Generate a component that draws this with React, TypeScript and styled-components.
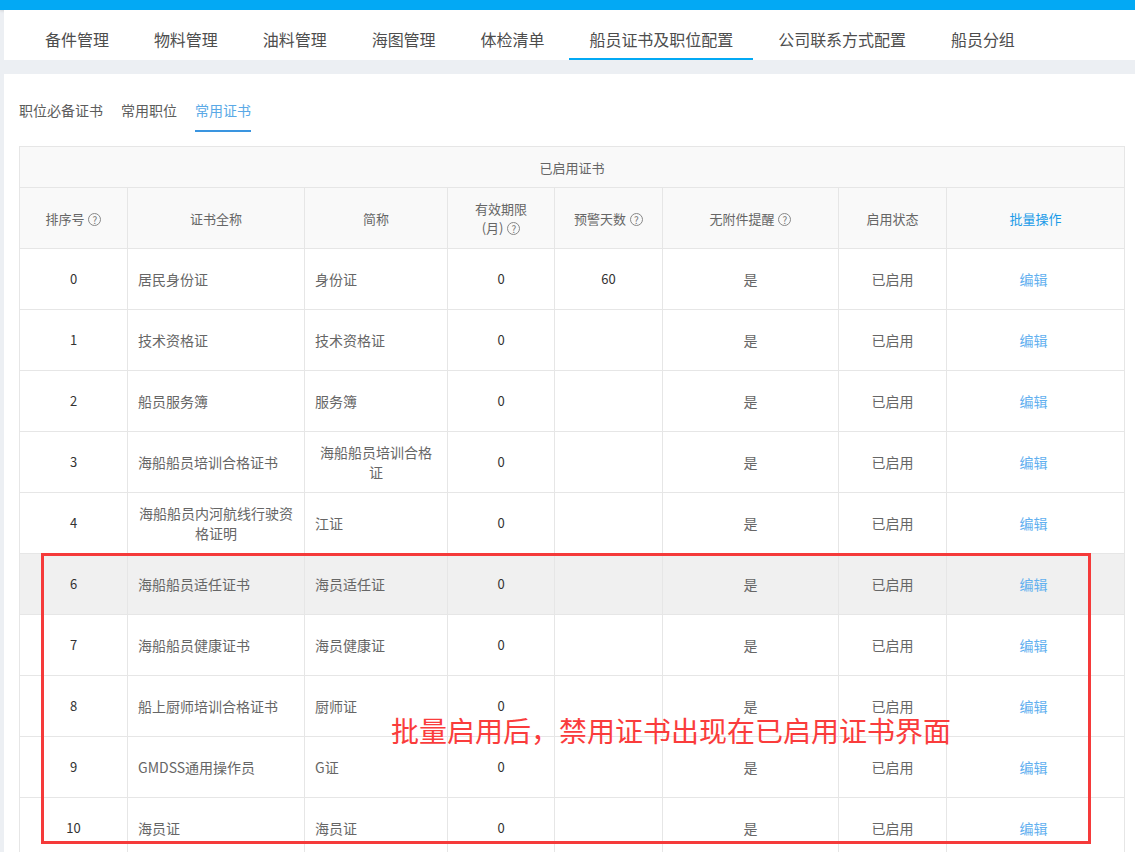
import styled, { createGlobalStyle } from "styled-components";

type Cert = {
  no: string;
  name: string;
  short: string;
  valid: string;
  warn?: string;
  hover?: boolean;
};

const tabs = [
  "备件管理",
  "物料管理",
  "油料管理",
  "海图管理",
  "体检清单",
  "船员证书及职位配置",
  "公司联系方式配置",
  "船员分组",
];

const subTabs = ["职位必备证书", "常用职位", "常用证书"];

const certs: Cert[] = [
  { no: "0", name: "居民身份证", short: "身份证", valid: "0", warn: "60" },
  { no: "1", name: "技术资格证", short: "技术资格证", valid: "0" },
  { no: "2", name: "船员服务簿", short: "服务簿", valid: "0" },
  { no: "3", name: "海船船员培训合格证书", short: "海船船员培训合格证", valid: "0" },
  { no: "4", name: "海船船员内河航线行驶资格证明", short: "江证", valid: "0" },
  { no: "6", name: "海船船员适任证书", short: "海员适任证", valid: "0", hover: true },
  { no: "7", name: "海船船员健康证书", short: "海员健康证", valid: "0" },
  { no: "8", name: "船上厨师培训合格证书", short: "厨师证", valid: "0" },
  { no: "9", name: "GMDSS通用操作员", short: "G证", valid: "0" },
  { no: "10", name: "海员证", short: "海员证", valid: "0" },
];

const colWidths = [108, 177, 143, 107, 108, 176, 108, 178];

const Help = () => <HelpMark>?</HelpMark>;

export default function App() {
  return (
    <Page>
      <GlobalStyle />
      <TopStrip />
      <Main>
        <TabBar>
          {tabs.map((t) => (
            <Tab key={t} $active={t === "船员证书及职位配置"}>
              {t}
            </Tab>
          ))}
        </TabBar>
        <Content>
          <SubTabs>
            {subTabs.map((t) => (
              <SubTab key={t} $active={t === "常用证书"}>
                {t}
              </SubTab>
            ))}
          </SubTabs>
          <Table>
            <colgroup>
              {colWidths.map((w, i) => (
                <col key={i} style={{ width: w }} />
              ))}
            </colgroup>
            <thead>
              <tr>
                <Caption colSpan={8}>已启用证书</Caption>
              </tr>
              <tr>
                <HeadCell>
                  排序号 <Help />
                </HeadCell>
                <HeadCell>证书全称</HeadCell>
                <HeadCell>简称</HeadCell>
                <HeadCell>
                  有效期限
                  <br />
                  (月) <Help />
                </HeadCell>
                <HeadCell>
                  预警天数 <Help />
                </HeadCell>
                <HeadCell>
                  无附件提醒 <Help />
                </HeadCell>
                <HeadCell>启用状态</HeadCell>
                <HeadCell $link>批量操作</HeadCell>
              </tr>
            </thead>
            <tbody>
              {certs.map((c) => (
                <Row key={c.no} $hover={c.hover}>
                  <Cell $num>{c.no}</Cell>
                  <Cell $align="left">
                    <Wrap>{c.name}</Wrap>
                  </Cell>
                  <Cell $align="left">
                    <Wrap>{c.short}</Wrap>
                  </Cell>
                  <Cell $num>{c.valid}</Cell>
                  <Cell $num>{c.warn ?? ""}</Cell>
                  <Cell>是</Cell>
                  <Cell>已启用</Cell>
                  <Cell>
                    <EditLink>编辑</EditLink>
                  </Cell>
                </Row>
              ))}
            </tbody>
          </Table>
        </Content>
      </Main>
      <MarkBox />
      <Note>批量启用后，禁用证书出现在已启用证书界面</Note>
    </Page>
  );
}

const GlobalStyle = createGlobalStyle`
  html, body {
    margin: 0;
    padding: 0;
    overflow: hidden;
    background: #eceff3;
    font-family: "Noto Sans CJK SC", "Liberation Sans", sans-serif;
  }
  * { box-sizing: border-box; }
`;

const Page = styled.div`
  position: relative;
  width: 1135px;
  height: 852px;
  overflow: hidden;
`;

const TopStrip = styled.div`
  height: 10px;
  background: #03a9f4;
  box-shadow: 0 1px 3px rgba(0, 0, 0, 0.12);
`;

const Main = styled.div`
  margin-left: 4px;
`;

const TabBar = styled.div`
  display: flex;
  gap: 5px;
  height: 50px;
  padding-left: 21px;
  background: #fff;
`;

const Tab = styled.div<{ $active?: boolean }>`
  padding: 18px 20px 8px;
  font-size: 16px;
  line-height: 22px;
  color: #4d4d4d;
  letter-spacing: -0.03px;
  border-bottom: 2px solid ${(p) => (p.$active ? "#03a9f4" : "transparent")};
`;

const Content = styled.div`
  margin-top: 14px;
  padding: 25px 11px 0 15px;
  background: #fff;
  min-height: 800px;
`;

const SubTabs = styled.div`
  display: flex;
  gap: 18px;
  margin-bottom: 14px;
`;

const SubTab = styled.div<{ $active?: boolean }>`
  padding-bottom: 9px;
  font-size: 14px;
  line-height: 22px;
  color: ${(p) => (p.$active ? "#5aa9e6" : "#5c5c5c")};
  border-bottom: 2px solid ${(p) => (p.$active ? "#3a95e0" : "transparent")};
`;

const Table = styled.table`
  width: 1105px;
  table-layout: fixed;
  border-collapse: collapse;
  font-size: 14px;
  color: #666;
`;

const Caption = styled.th`
  height: 41px;
  background: #f9f9f9;
  border: 1px solid #e6e6e6;
  font-weight: normal;
  font-size: 13px;
  color: #666;
  text-align: center;
`;

const HeadCell = styled.th<{ $link?: boolean }>`
  height: 61px;
  padding: 0 8px;
  background: #f9f9f9;
  border: 1px solid #e6e6e6;
  font-weight: normal;
  font-size: 13px;
  line-height: 19px;
  text-align: center;
  color: ${(p) => (p.$link ? "#1a9be8" : "#666")};
`;

const HelpMark = styled.span`
  display: inline-block;
  width: 13px;
  height: 13px;
  margin-left: 1px;
  border: 1px solid #888;
  border-radius: 50%;
  font-size: 10px;
  line-height: 11px;
  text-align: center;
  color: #777;
  vertical-align: 0;
`;

const Row = styled.tr<{ $hover?: boolean }>`
  background: ${(p) => (p.$hover ? "#f0f0f0" : "#fff")};
`;

const Cell = styled.td<{ $align?: "left" | "center"; $num?: boolean }>`
  height: 61px;
  padding: 0 10px;
  border: 1px solid #e6e6e6;
  line-height: 20px;
  font-size: ${(p) => (p.$num ? "13px" : "14px")};
  color: ${(p) => (p.$num ? "#333" : "#666")};
  text-align: ${(p) => p.$align ?? "center"};
`;

const Wrap = styled.span`
  display: inline-block;
  text-align: center;
`;

const EditLink = styled.span`
  margin-right: 4px;
  color: #62b0ef;
  cursor: pointer;
`;

const MarkBox = styled.div`
  position: absolute;
  left: 41px;
  top: 553px;
  width: 1050px;
  height: 291px;
  border: 3px solid #f53a3a;
  pointer-events: none;
`;

const Note = styled.div`
  position: absolute;
  left: 391px;
  top: 712px;
  font-size: 28px;
  line-height: 36px;
  color: #fa3c3c;
  white-space: nowrap;
`;
